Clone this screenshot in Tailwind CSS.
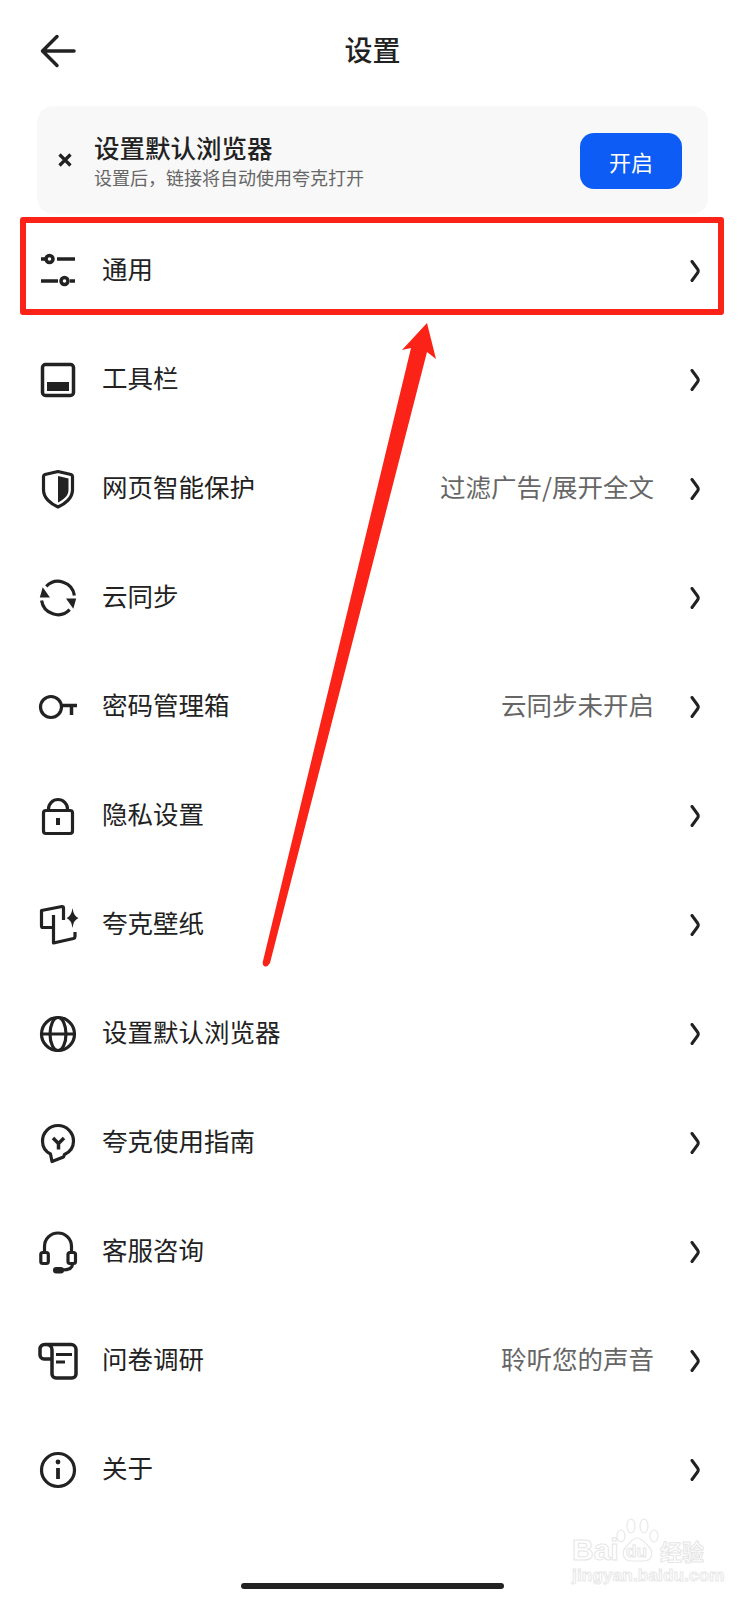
<!DOCTYPE html>
<html lang="zh-CN">
  <head>
    <meta charset="UTF-8" />
    <meta name="viewport" content="width=device-width, initial-scale=1.0" />
    <title>设置</title>
    <script src="https://cdn.jsdelivr.net/npm/@tailwindcss/browser@4"></script>
  </head>
  <body class="bg-white text-[#222] font-['Noto_Sans_CJK_SC','Noto_Sans',sans-serif]">
    <div class="relative w-[745px] h-[1600px] overflow-hidden">
      <!-- Header -->
      <header class="h-[102px] px-[38px] flex items-center justify-between">
        <svg class="w-10 h-10" viewBox="0 0 40 40" fill="none" stroke="#222" stroke-width="3.500" stroke-linecap="round" stroke-linejoin="round"><path d="M36 20H5M19 5.500 4.500 20 19 34.500"/></svg>
        <h1 class="text-[28px] leading-10 font-medium pb-1">设置</h1>
        <div class="w-10"></div>
      </header>

      <!-- Default browser banner -->
      <section class="mt-1 mx-[37px] h-[108px] rounded-2xl bg-[#f8f8f8] pl-[21px] pr-[26px] flex items-center">
        <svg class="w-[14px] h-[14px]" viewBox="0 0 14 14" fill="none" stroke="#222" stroke-width="3.200"><path d="M1.500 1.500l11 11M12.500 1.500l-11 11"/></svg>
        <div class="ml-[22px] mt-px flex-1">
          <div class="text-[25.500px] leading-[28px] font-medium">设置默认浏览器</div>
          <div class="text-[18px] leading-[24px] mt-1 text-[#666]">设置后，链接将自动使用夸克打开</div>
        </div>
        <button class="w-[102px] h-[56px] mt-[2px] rounded-[14px] bg-[#0d5cf5] text-white text-[22px]">开启</button>
      </section>

      <!-- Settings list -->
      <ul class="mt-[2px]">
        <li class="h-[109px] pl-[38px] pr-[44px] flex items-center">
          <svg class="w-10 h-10 shrink-0" viewBox="0 0 40 40" fill="none" stroke="#222" stroke-width="3.500"><circle cx="11.500" cy="8" r="3.500"/><path d="M3 8h5M19 8h18M3 30h17"/><circle cx="26.500" cy="30" r="3.500"/><path d="M32 30h5"/></svg>
          <span class="ml-6 pb-[6px] text-[25.500px] leading-9">通用</span>
          <svg class="ml-auto w-3 h-[22px]" viewBox="0 0 12 22" fill="none" stroke="#222" stroke-width="3" stroke-linecap="round" stroke-linejoin="round"><path d="M3 1.500 8.500 9q1.500 2 0 4L3 20.500"/></svg>
        </li>
        <li class="h-[109px] pl-[38px] pr-[44px] flex items-center">
          <svg class="w-10 h-10 shrink-0" viewBox="0 0 40 40" fill="none" stroke="#222" stroke-width="3.500"><rect x="4.500" y="4.500" width="31" height="31" rx="3"/><rect x="9" y="22" width="22" height="9" fill="#222" stroke="none"/></svg>
          <span class="ml-6 pb-[6px] text-[25.500px] leading-9">工具栏</span>
          <svg class="ml-auto w-3 h-[22px]" viewBox="0 0 12 22" fill="none" stroke="#222" stroke-width="3" stroke-linecap="round" stroke-linejoin="round"><path d="M3 1.500 8.500 9q1.500 2 0 4L3 20.500"/></svg>
        </li>
        <li class="h-[109px] pl-[38px] pr-[44px] flex items-center">
          <svg class="w-10 h-10 shrink-0" viewBox="0 0 40 40" fill="none" stroke="#222" stroke-width="3.200" stroke-linejoin="round"><path d="M20 2.500 33 5.500q1.500.5 1.500 2V21C34.500 29 27 35 20 38 13 35 5.500 29 5.500 21V7.500q0-1.500 1.500-2z"/><path d="M20 7l10.500 2.500V21c0 6-5.500 10-10.500 12.500z" fill="#222" stroke="none"/></svg>
          <span class="ml-6 pb-[6px] text-[25.500px] leading-9">网页智能保护</span>
          <span class="ml-auto pb-[6px] text-[25.500px] leading-9 text-[#666]">过滤广告/展开全文</span>
          <svg class="ml-[35px] w-3 h-[22px]" viewBox="0 0 12 22" fill="none" stroke="#222" stroke-width="3" stroke-linecap="round" stroke-linejoin="round"><path d="M3 1.500 8.500 9q1.500 2 0 4L3 20.500"/></svg>
        </li>
        <li class="h-[109px] pl-[38px] pr-[44px] flex items-center">
          <svg class="w-10 h-10 shrink-0" viewBox="0 0 40 40" fill="none" stroke="#222" stroke-width="3.200"><path d="M8.300 8.300A16.500 16.500 0 0 1 36.400 17.500"/><path d="M31.700 31.700A16.500 16.500 0 0 1 3.600 22.500"/><path d="M4.700 9.200 12 19.500H1.800z" fill="#222" stroke="none"/><path d="M35.300 30.800 28 20.500h10.200z" fill="#222" stroke="none"/></svg>
          <span class="ml-6 pb-[6px] text-[25.500px] leading-9">云同步</span>
          <svg class="ml-auto w-3 h-[22px]" viewBox="0 0 12 22" fill="none" stroke="#222" stroke-width="3" stroke-linecap="round" stroke-linejoin="round"><path d="M3 1.500 8.500 9q1.500 2 0 4L3 20.500"/></svg>
        </li>
        <li class="h-[109px] pl-[38px] pr-[44px] flex items-center">
          <svg class="w-10 h-10 shrink-0" viewBox="0 0 40 40" fill="none" stroke="#222" stroke-width="3.200"><circle cx="13" cy="20" r="10.500"/><path d="M23 18.500h16M33.500 18v10" stroke-width="3.500"/></svg>
          <span class="ml-6 pb-[6px] text-[25.500px] leading-9">密码管理箱</span>
          <span class="ml-auto pb-[6px] text-[25.500px] leading-9 text-[#666]">云同步未开启</span>
          <svg class="ml-[35px] w-3 h-[22px]" viewBox="0 0 12 22" fill="none" stroke="#222" stroke-width="3" stroke-linecap="round" stroke-linejoin="round"><path d="M3 1.500 8.500 9q1.500 2 0 4L3 20.500"/></svg>
        </li>
        <li class="h-[109px] pl-[38px] pr-[44px] flex items-center">
          <svg class="w-10 h-10 shrink-0" viewBox="0 0 40 40" fill="none" stroke="#222" stroke-width="3.200"><rect x="5.500" y="14.500" width="29" height="23" rx="2.500"/><path d="M10.500 14.500V13a9.500 9.500 0 0 1 19 0v1.500"/><rect x="18" y="22" width="4" height="7" fill="#222" stroke="none"/></svg>
          <span class="ml-6 pb-[6px] text-[25.500px] leading-9">隐私设置</span>
          <svg class="ml-auto w-3 h-[22px]" viewBox="0 0 12 22" fill="none" stroke="#222" stroke-width="3" stroke-linecap="round" stroke-linejoin="round"><path d="M3 1.500 8.500 9q1.500 2 0 4L3 20.500"/></svg>
        </li>
        <li class="h-[109px] pl-[38px] pr-[44px] flex items-center">
          <svg class="w-10 h-10 shrink-0 overflow-visible" viewBox="0 0 40 40" fill="none" stroke="#222" stroke-width="3.200" stroke-linejoin="round"><path d="M15.500 22.500H5q-1.500 0-1.500-1.500V5.500L24 1.500q1.500 0 1.500 1.500V15"/><path d="M15.500 10V38l20-4.500q1.500-.5 1.500-2V27"/><path d="M34.500 3q1 8 6 10-5 2-6 10-1-8-6-10 5-2 6-10z" fill="#222" stroke="none"/></svg>
          <span class="ml-6 pb-[6px] text-[25.500px] leading-9">夸克壁纸</span>
          <svg class="ml-auto w-3 h-[22px]" viewBox="0 0 12 22" fill="none" stroke="#222" stroke-width="3" stroke-linecap="round" stroke-linejoin="round"><path d="M3 1.500 8.500 9q1.500 2 0 4L3 20.500"/></svg>
        </li>
        <li class="h-[109px] pl-[38px] pr-[44px] flex items-center">
          <svg class="w-10 h-10 shrink-0" viewBox="0 0 40 40" fill="none" stroke="#222" stroke-width="3.200"><circle cx="20" cy="20" r="16.500"/><ellipse cx="20" cy="20" rx="8" ry="16.500"/><path d="M3.500 20h33"/></svg>
          <span class="ml-6 pb-[6px] text-[25.500px] leading-9">设置默认浏览器</span>
          <svg class="ml-auto w-3 h-[22px]" viewBox="0 0 12 22" fill="none" stroke="#222" stroke-width="3" stroke-linecap="round" stroke-linejoin="round"><path d="M3 1.500 8.500 9q1.500 2 0 4L3 20.500"/></svg>
        </li>
        <li class="h-[109px] pl-[38px] pr-[44px] flex items-center">
          <svg class="w-10 h-10 shrink-0 overflow-visible" viewBox="0 0 40 40" fill="none" stroke="#222" stroke-width="3.200" stroke-linejoin="round"><path d="M12.500 31C7.500 28.500 4.500 23.500 4.500 18a15.500 15.500 0 0 1 31 0c0 6-3.500 11-9 13.500L25.500 34 14 38.500z"/><path d="M15 15l5.500 5.500L26 15M20.500 20v6.500" stroke-width="3.500"/></svg>
          <span class="ml-6 pb-[6px] text-[25.500px] leading-9">夸克使用指南</span>
          <svg class="ml-auto w-3 h-[22px]" viewBox="0 0 12 22" fill="none" stroke="#222" stroke-width="3" stroke-linecap="round" stroke-linejoin="round"><path d="M3 1.500 8.500 9q1.500 2 0 4L3 20.500"/></svg>
        </li>
        <li class="h-[109px] pl-[38px] pr-[44px] flex items-center">
          <svg class="w-10 h-10 shrink-0 overflow-visible" viewBox="0 0 40 40" fill="none" stroke="#222" stroke-width="3.200"><path d="M6.500 20v-5.500a13.500 13.500 0 0 1 27 0V20"/><rect x="2.800" y="20.500" width="7.500" height="11" rx="2"/><rect x="30" y="20.500" width="7.500" height="11" rx="2"/><path d="M34.500 32c0 4-4 6-10 6"/><rect x="15" y="35" width="11" height="6.500" rx="3.200" fill="#222" stroke="none"/></svg>
          <span class="ml-6 pb-[6px] text-[25.500px] leading-9">客服咨询</span>
          <svg class="ml-auto w-3 h-[22px]" viewBox="0 0 12 22" fill="none" stroke="#222" stroke-width="3" stroke-linecap="round" stroke-linejoin="round"><path d="M3 1.500 8.500 9q1.500 2 0 4L3 20.500"/></svg>
        </li>
        <li class="h-[109px] pl-[38px] pr-[44px] flex items-center">
          <svg class="w-10 h-10 shrink-0" viewBox="0 0 40 40" fill="none" stroke="#222" stroke-width="3.500" stroke-linejoin="round"><path d="M7 3.500h26a5 5 0 0 1 5 5V33a4 4 0 0 1-4 4H18a4 4 0 0 1-4-4V9a5.500 5.500 0 0 0-5.500-5.500h-2A4.500 4.500 0 0 0 2 8v6a4 4 0 0 0 4 4h8"/><path d="M18 13.500h16M18 21h9" stroke-width="3"/></svg>
          <span class="ml-6 pb-[6px] text-[25.500px] leading-9">问卷调研</span>
          <span class="ml-auto pb-[6px] text-[25.500px] leading-9 text-[#666]">聆听您的声音</span>
          <svg class="ml-[35px] w-3 h-[22px]" viewBox="0 0 12 22" fill="none" stroke="#222" stroke-width="3" stroke-linecap="round" stroke-linejoin="round"><path d="M3 1.500 8.500 9q1.500 2 0 4L3 20.500"/></svg>
        </li>
        <li class="h-[109px] pl-[38px] pr-[44px] flex items-center">
          <svg class="w-10 h-10 shrink-0" viewBox="0 0 40 40" fill="none" stroke="#222" stroke-width="3.200"><circle cx="20" cy="20" r="16.500"/><path d="M20 18v11" stroke-width="3.800"/><circle cx="20" cy="12" r="2.400" fill="#222" stroke="none"/></svg>
          <span class="ml-6 pb-[6px] text-[25.500px] leading-9">关于</span>
          <svg class="ml-auto w-3 h-[22px]" viewBox="0 0 12 22" fill="none" stroke="#222" stroke-width="3" stroke-linecap="round" stroke-linejoin="round"><path d="M3 1.500 8.500 9q1.500 2 0 4L3 20.500"/></svg>
        </li>
      </ul>

      <!-- Home indicator -->
      <div class="absolute left-[241px] top-[1583px] w-[263px] h-[6px] rounded-full bg-[#222]"></div>

      <!-- Red annotation: box and arrow over the list -->
      <div class="absolute left-[20px] top-[217px] w-[704px] h-[98px] border-[6px] border-[#fb2318] rounded-[3px]"></div>
      <svg class="absolute left-0 top-0 w-[745px] h-[1000px]" viewBox="0 0 745 1000"><path d="M427 323 436 359 427 352 270 963Q267 968 264 966 262 964 263 961L411 348 402 350z" fill="#fb2318"/></svg>

      <!-- Watermark -->
      <div class="absolute left-[572px] top-[1518px] w-[135px] h-[68px] text-white font-['Liberation_Sans',sans-serif]">
        <svg class="absolute left-[44px] top-0 w-[44px] h-[46px]" viewBox="0 0 44 46" fill="none" stroke="#e8e8e8" stroke-width="1.200"><ellipse cx="5" cy="18" rx="4" ry="6"/><ellipse cx="15" cy="8" rx="4" ry="7"/><ellipse cx="28" cy="8" rx="4" ry="7"/><ellipse cx="38" cy="18" rx="4" ry="6"/><path d="M21 20c-5 0-7 5-11 9-5 5-3 14 5 14h13c8 0 10-9 5-14-4-4-7-9-12-9z"/></svg>
        <span class="absolute left-0 top-[14px] text-[30px] leading-9 font-bold [-webkit-text-stroke:1px_#e6e6e6]">Bai</span>
        <span class="absolute left-[54px] top-[22px] text-[17px] leading-6 font-bold [-webkit-text-stroke:1px_#e6e6e6]">du</span>
        <span class="absolute left-[88px] top-[14px] text-[22px] leading-9 font-bold font-['Noto_Sans_CJK_SC',sans-serif] [-webkit-text-stroke:1px_#e6e6e6]">经验</span>
        <span class="absolute left-0 top-[48px] text-[17px] leading-5 font-bold tracking-[0.2px] [-webkit-text-stroke:1px_#e8e8e8]">jingyan.baidu.com</span>
      </div>
    </div>
  </body>
</html>
